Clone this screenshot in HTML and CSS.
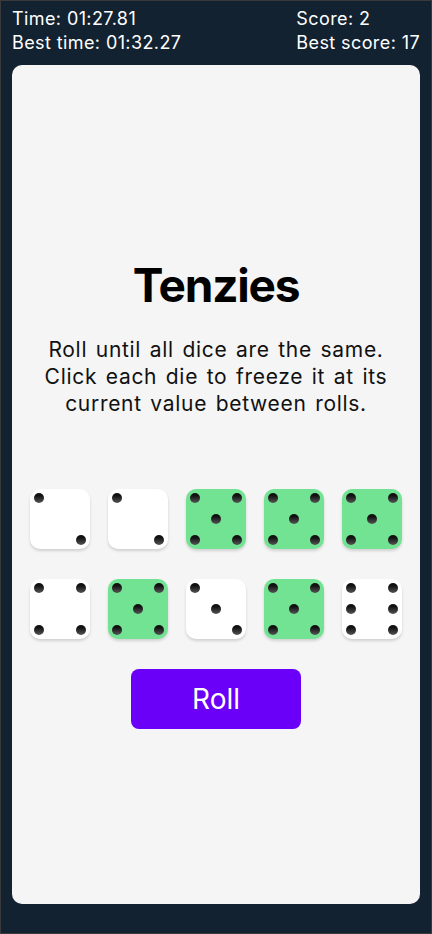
FILE: index.html
```html
<!DOCTYPE html>
<html lang="en">
<head>
<meta charset="utf-8">
<title>Tenzies</title>
<link rel="stylesheet" href="styles.css">
</head>
<body>
  <header class="stats">
    <div class="stats-col">
      <div>Time: 01:27.81</div>
      <div>Best time: 01:32.27</div>
    </div>
    <div class="stats-col">
      <div>Score: 2</div>
      <div>Best score: 17</div>
    </div>
  </header>
  <main class="board">
    <h1 class="title">Tenzies</h1>
    <p class="instructions">Roll until all dice are the same.<br>Click each die to freeze it at its<br>current value between rolls.</p>
    <div class="dice">
      <div class="die face-2"><span class="pip p1"></span><span class="pip p9"></span></div>
      <div class="die face-2"><span class="pip p1"></span><span class="pip p9"></span></div>
      <div class="die held"><span class="pip p1"></span><span class="pip p3"></span><span class="pip p5"></span><span class="pip p7"></span><span class="pip p9"></span></div>
      <div class="die held"><span class="pip p1"></span><span class="pip p3"></span><span class="pip p5"></span><span class="pip p7"></span><span class="pip p9"></span></div>
      <div class="die held"><span class="pip p1"></span><span class="pip p3"></span><span class="pip p5"></span><span class="pip p7"></span><span class="pip p9"></span></div>
      <div class="die"><span class="pip p1"></span><span class="pip p3"></span><span class="pip p7"></span><span class="pip p9"></span></div>
      <div class="die held"><span class="pip p1"></span><span class="pip p3"></span><span class="pip p5"></span><span class="pip p7"></span><span class="pip p9"></span></div>
      <div class="die"><span class="pip p1"></span><span class="pip p5"></span><span class="pip p9"></span></div>
      <div class="die held"><span class="pip p1"></span><span class="pip p3"></span><span class="pip p5"></span><span class="pip p7"></span><span class="pip p9"></span></div>
      <div class="die"><span class="pip p1"></span><span class="pip p3"></span><span class="pip p4"></span><span class="pip p6"></span><span class="pip p7"></span><span class="pip p9"></span></div>
    </div>
    <button class="roll">Roll</button>
  </main>
</body>
</html>
```
FILE: styles.css
```css
* { box-sizing: border-box; }
html, body { height: 100%; }
body {
  margin: 0;
  background: #132231;
  border: 1px solid #3a3a3a;
  font-family: "Inter", "Noto Sans", sans-serif;
  display: flex;
  flex-direction: column;
}
.stats {
  display: flex;
  justify-content: space-between;
  padding: 6px 11px 0;
  color: #ffffff;
  font-size: 18px;
  letter-spacing: 0.4px;
  line-height: 24px;
  height: 64px;
}
.board {
  flex: 1;
  margin: 0 11px 29px;
  background: #f5f5f5;
  border-radius: 10px;
  display: flex;
  flex-direction: column;
  align-items: center;
  padding-top: 192px;
}
.title {
  margin: 0;
  font-size: 46px;
  line-height: 56px;
  font-weight: 700;
  color: #000;
  letter-spacing: -1.2px;
}
.instructions {
  margin: 23px 0 0;
  text-align: center;
  font-size: 21px;
  line-height: 27px;
  letter-spacing: 0.7px;
  word-spacing: 2px;
  color: #111;
}
.dice {
  margin-top: 72px;
  display: grid;
  grid-template-columns: repeat(5, 60px);
  grid-auto-rows: 60px;
  column-gap: 18px;
  row-gap: 30px;
}
.die {
  background: #ffffff;
  border-radius: 10px;
  box-shadow: 0 2px 3px rgba(0, 0, 0, 0.15);
  display: grid;
  grid-template-columns: repeat(3, 10px);
  grid-template-rows: repeat(3, 10px);
  justify-content: space-between;
  align-content: space-between;
  padding: 4px;
}
.die.held { background: #72e293; }
.pip {
  width: 10px;
  height: 10px;
  border-radius: 50%;
  background: linear-gradient(to bottom, #111 25%, #555 100%);
}
.p1 { grid-area: 1 / 1; }
.p3 { grid-area: 1 / 3; }
.p4 { grid-area: 2 / 1; }
.p5 { grid-area: 2 / 2; }
.p6 { grid-area: 2 / 3; }
.p7 { grid-area: 3 / 1; }
.p9 { grid-area: 3 / 3; }
.roll {
  margin-top: 30px;
  width: 170px;
  height: 60px;
  border: none;
  border-radius: 8px;
  background: #6a00f8;
  color: #fff;
  font-family: "Inter", "Noto Sans", sans-serif;
  font-size: 28px;
}
```
